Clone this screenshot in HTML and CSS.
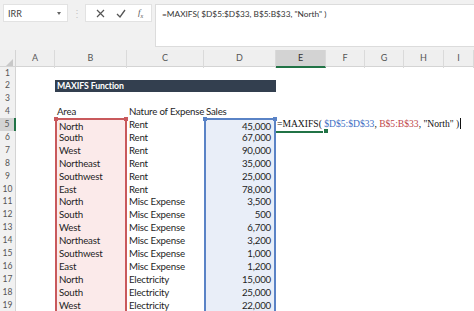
FILE: index.html
```html
<!DOCTYPE html>
<html lang="en">
  <head>
    <meta charset="UTF-8" />
    <meta name="viewport" content="width=device-width, initial-scale=1.0" />
    <title>MAXIFS Function</title>
    <link rel="stylesheet" href="styles.css">
  </head>
  <body>
    <!-- Barra de fórmulas -->
    <div class="toolbar">
      <div class="namebox">
        <span>IRR</span>
        <span class="caret"></span>
      </div>
      <div class="grip">⋮</div>
      <div class="fx-buttons">
        <svg width="9" height="9" viewBox="0 0 9 9"><path d="M1 1 L8 8 M8 1 L1 8" stroke="#555" stroke-width="1.2" fill="none" /></svg>
        <svg width="10" height="9" viewBox="0 0 10 9"><path d="M1 5 L4 8 L9 1" stroke="#555" stroke-width="1.3" fill="none" /></svg>
        <span class="fx">f<sub>x</sub></span>
      </div>
      <div class="formula">=MAXIFS( $D$5:$D$33, B$5:B$33, "North" )</div>
    </div>

    <!-- Hoja -->
    <div class="sheet">
      <div class="row head">
        <div class="corner"><span class="tri"></span></div>
        <div class="ch">A</div>
        <div class="ch">B</div>
        <div class="ch">C</div>
        <div class="ch">D</div>
        <div class="ch sel">E</div>
        <div class="ch">F</div>
        <div class="ch">G</div>
        <div class="ch">H</div>
        <div class="ch">I</div>
      </div>
      <div class="row"><div class="rh">1</div></div>
      <div class="row">
        <div class="rh">2</div><div></div>
        <div class="title">MAXIFS Function</div>
      </div>
      <div class="row"><div class="rh">3</div></div>
      <div class="row">
        <div class="rh">4</div><div></div>
        <div class="c">Area</div><div class="c">Nature of Expense</div><div class="c">Sales</div>
      </div>
      <div class="row">
        <div class="rh sel">5</div><div></div>
        <div class="c b top">North</div><div class="c">Rent</div><div class="c d top num">45,000</div>
        <div class="c active">
          <span class="edit">=MAXIFS( <span class="blue">$D$5:$D$33</span>, <span class="red">B$5:B$33</span>, "North" )<span class="cursor"></span></span>
        </div>
      </div>
      <div class="row"><div class="rh">6</div><div></div><div class="c b">South</div><div class="c">Rent</div><div class="c d num">67,000</div></div>
      <div class="row"><div class="rh">7</div><div></div><div class="c b">West</div><div class="c">Rent</div><div class="c d num">90,000</div></div>
      <div class="row"><div class="rh">8</div><div></div><div class="c b">Northeast</div><div class="c">Rent</div><div class="c d num">35,000</div></div>
      <div class="row"><div class="rh">9</div><div></div><div class="c b">Southwest</div><div class="c">Rent</div><div class="c d num">25,000</div></div>
      <div class="row"><div class="rh">10</div><div></div><div class="c b">East</div><div class="c">Rent</div><div class="c d num">78,000</div></div>
      <div class="row"><div class="rh">11</div><div></div><div class="c b">North</div><div class="c">Misc Expense</div><div class="c d num">3,500</div></div>
      <div class="row"><div class="rh">12</div><div></div><div class="c b">South</div><div class="c">Misc Expense</div><div class="c d num">500</div></div>
      <div class="row"><div class="rh">13</div><div></div><div class="c b">West</div><div class="c">Misc Expense</div><div class="c d num">6,700</div></div>
      <div class="row"><div class="rh">14</div><div></div><div class="c b">Northeast</div><div class="c">Misc Expense</div><div class="c d num">3,200</div></div>
      <div class="row"><div class="rh">15</div><div></div><div class="c b">Southwest</div><div class="c">Misc Expense</div><div class="c d num">1,000</div></div>
      <div class="row"><div class="rh">16</div><div></div><div class="c b">East</div><div class="c">Misc Expense</div><div class="c d num">1,200</div></div>
      <div class="row"><div class="rh">17</div><div></div><div class="c b">North</div><div class="c">Electricity</div><div class="c d num">15,000</div></div>
      <div class="row"><div class="rh">18</div><div></div><div class="c b">South</div><div class="c">Electricity</div><div class="c d num">25,000</div></div>
      <div class="row"><div class="rh">19</div><div></div><div class="c b">West</div><div class="c">Electricity</div><div class="c d num">22,000</div></div>
    </div>
  </body>
</html>
```

FILE: styles.css
```css
* {
  margin: 0;
  padding: 0;
  box-sizing: border-box;
}

body {
  font-family: Lato, "Liberation Sans", sans-serif;
  background-color: #ffffff;
  color: #1e1e1e;
  overflow: hidden;
}

/* Barra de fórmulas */
.toolbar {
  display: flex;
  align-items: flex-start;
  height: 50px;
  padding: 4px 0 0 3px;
  background-color: #f1f1f1;
}

.namebox {
  display: flex;
  align-items: center;
  justify-content: space-between;
  width: 65px;
  height: 18px;
  padding: 0 6px 0 4px;
  background-color: #ffffff;
  border: 1px solid #e2e2e2;
  font-size: 9px;
  color: #444;
}

.caret {
  width: 0;
  height: 0;
  border-left: 2.5px solid transparent;
  border-right: 2.5px solid transparent;
  border-top: 3px solid #666;
}

.grip {
  width: 17px;
  height: 18px;
  line-height: 18px;
  text-align: center;
  font-size: 10px;
  color: #c4c4c4;
}

.fx-buttons {
  display: flex;
  align-items: center;
  justify-content: space-around;
  width: 67px;
  height: 18px;
  padding: 0 2px 0 4px;
  background-color: #ffffff;
  border: 1px solid #e2e2e2;
}

.fx {
  font-family: "Liberation Serif", serif;
  font-style: italic;
  font-size: 9px;
  color: #555;
}

.fx sub {
  font-size: 6px;
}

.formula {
  flex: 1;
  height: 43px;
  margin-left: 3px;
  padding: 4px 6px;
  background-color: #ffffff;
  border: 1px solid #dcdcdc;
  border-right: none;
  font-size: 8.3px;
  color: #333;
  white-space: nowrap;
}

/* Hoja */
.row {
  display: grid;
  grid-template-columns: 16px 39px 72px 77px 72px 50px 39px 39px 40px 1fr;
  height: 12.9px;
  font-size: 9.7px;
  letter-spacing: -0.2px;
  line-height: 12.9px;
}

.row.head {
  height: 16.5px;
  line-height: 16px;
  background-color: #efefef;
  border-bottom: 1px solid #d4d4d4;
  font-size: 9px;
  letter-spacing: 0;
  color: #555;
}

.corner {
  position: relative;
  border-right: 1px solid #d4d4d4;
}

.tri {
  position: absolute;
  right: 2px;
  bottom: 2px;
  width: 0;
  height: 0;
  border-left: 7px solid transparent;
  border-bottom: 7px solid #c8c8c8;
}

.ch {
  text-align: center;
  border-right: 1px solid #dadada;
}

.ch.sel {
  background-color: #d3d3d3;
  border-bottom: 2px solid #217346;
  color: #333;
}

.rh {
  text-align: center;
  font-size: 8.5px;
  letter-spacing: 0;
  color: #555;
  background-color: #f1f1f1;
  border-right: 1px solid #d4d4d4;
  border-bottom: 1px solid #e2e2e2;
}

.rh.sel {
  background-color: #d3d3d3;
  border-right: 2px solid #217346;
}

.c {
  padding-left: 2px;
  white-space: nowrap;
}

.title {
  grid-column: 3 / 6;
  margin: 1px 0;
  padding-left: 2px;
  line-height: 11px;
  background-color: #333f4f;
  color: #ffffff;
  font-weight: bold;
  font-size: 8.7px;
  letter-spacing: -0.1px;
}

.num {
  text-align: right;
  padding-right: 3px;
}

/* Rangos de la fórmula */
.b {
  position: relative;
  background-color: #fbeaea;
  border-left: 2px solid #c9595c;
  border-right: 2px solid #c9595c;
}

.d {
  position: relative;
  background-color: #e9eef8;
  border-left: 2px solid #5a83c6;
  border-right: 2px solid #5a83c6;
}

.b.top {
  border-top: 2px solid #c9595c;
}

.d.top {
  border-top: 2px solid #5a83c6;
}

.top::before,
.top::after {
  content: "";
  position: absolute;
  top: -3px;
  width: 4px;
  height: 4px;
}

.top::before {
  left: -3px;
}

.top::after {
  right: -3px;
}

.b.top::before,
.b.top::after {
  background-color: #c9595c;
}

.d.top::before,
.d.top::after {
  background-color: #5a83c6;
}

.active {
  position: relative;
  border-bottom: 2px solid #217346;
  overflow: visible;
}

.active::after {
  content: "";
  position: absolute;
  right: -3px;
  bottom: -3px;
  width: 4px;
  height: 4px;
  background-color: #217346;
  border: 1px solid #ffffff;
}

.edit {
  position: absolute;
  left: 1px;
  top: 0;
  font-family: "Liberation Serif", serif;
  font-size: 9.6px;
  letter-spacing: 0;
  color: #111;
  z-index: 2;
}

.blue {
  color: #3e6fc4;
}

.red {
  color: #c0474a;
}

.cursor {
  display: inline-block;
  width: 1px;
  height: 11px;
  margin-left: 1px;
  vertical-align: -2px;
  background-color: #111;
}
```
